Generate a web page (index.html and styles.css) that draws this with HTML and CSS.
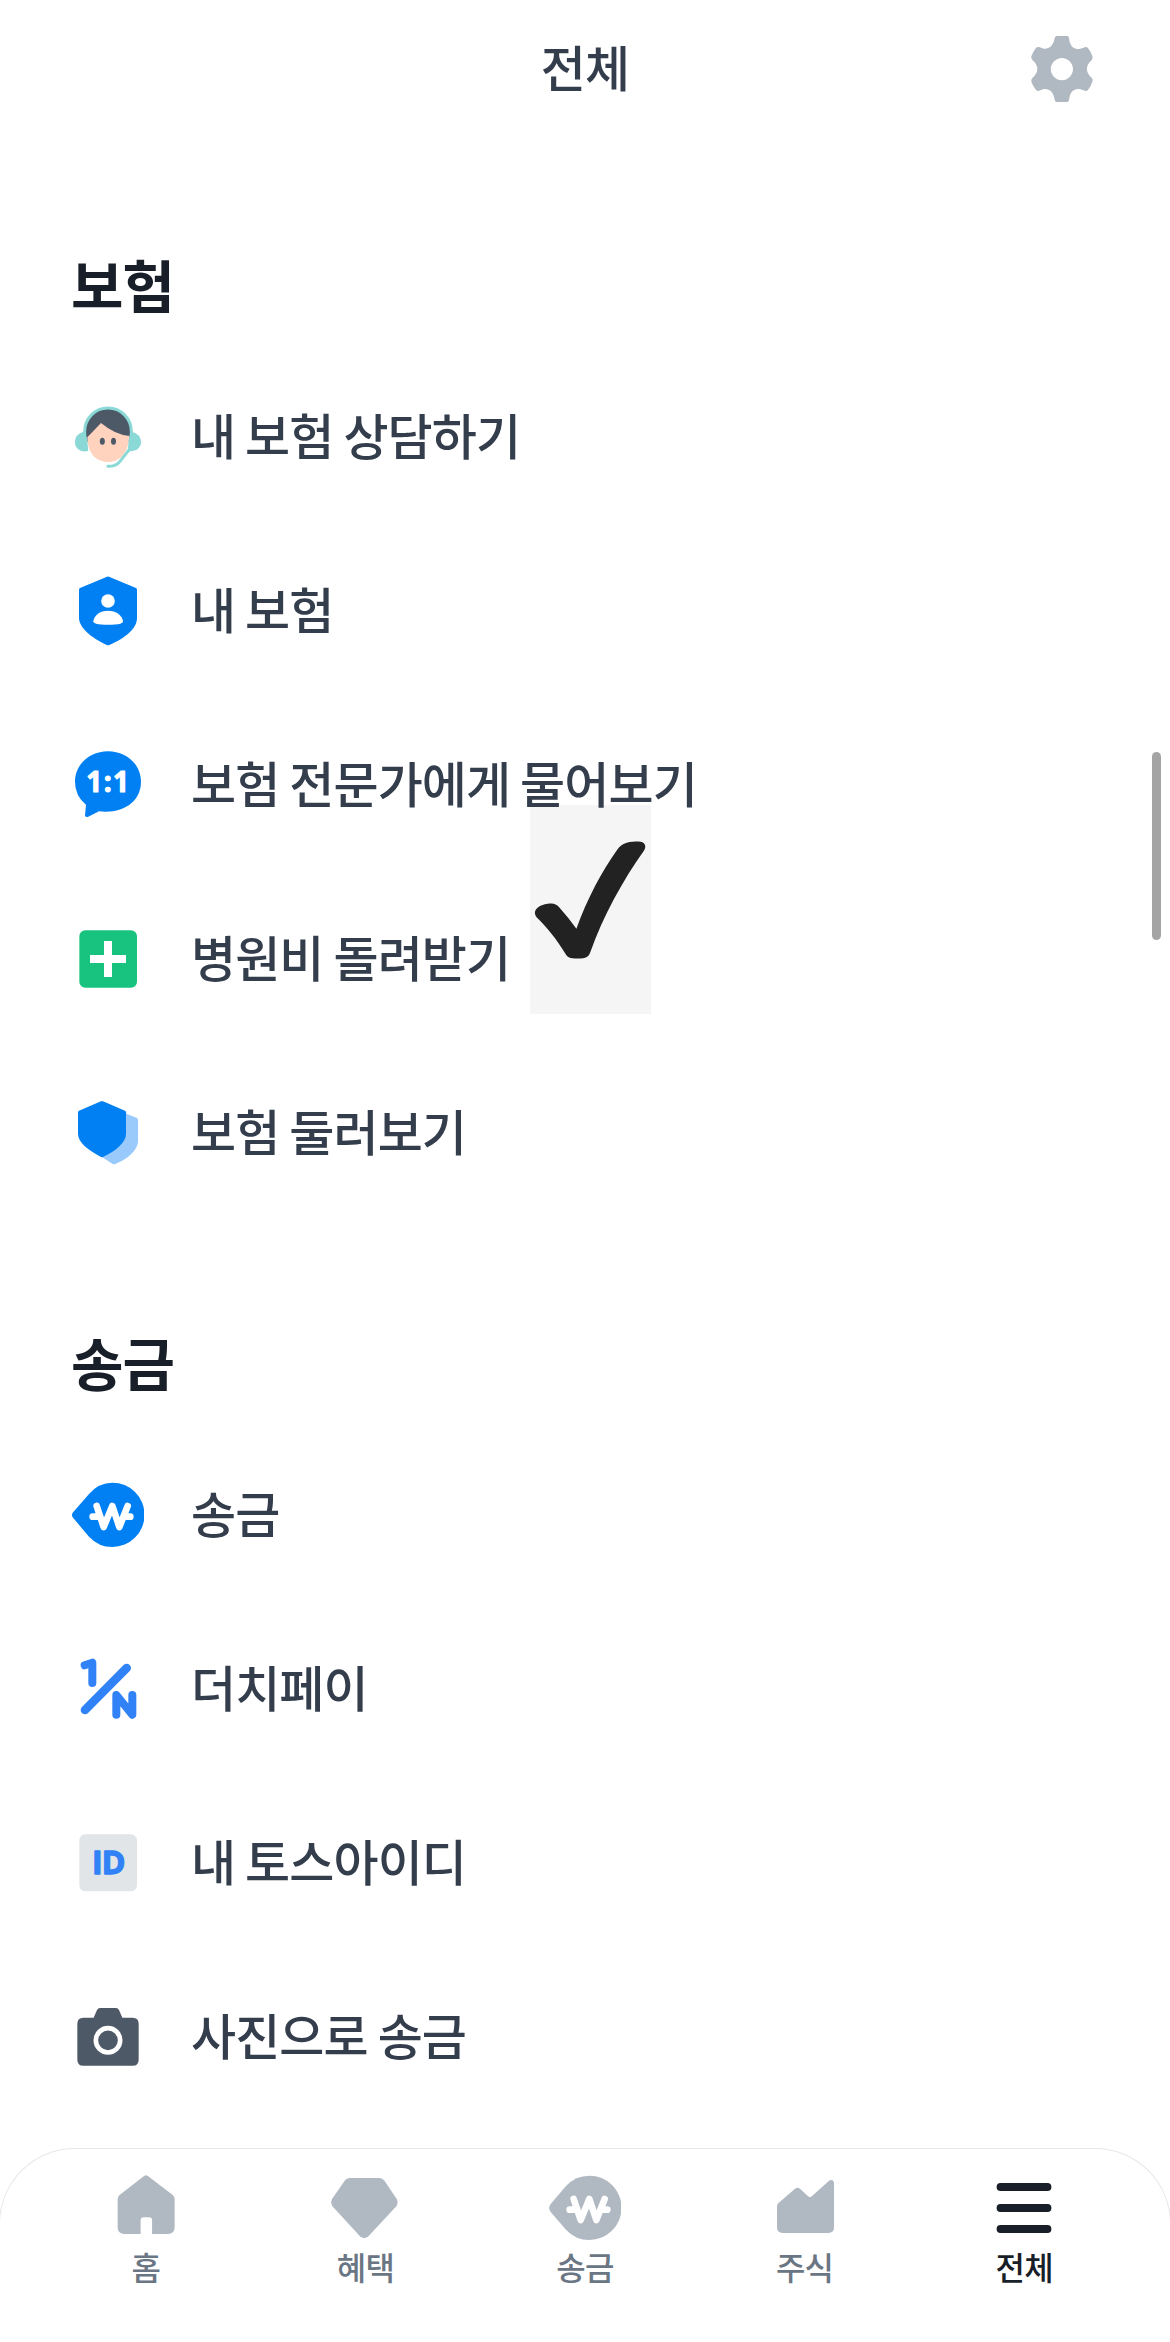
FILE: index.html
```
<!DOCTYPE html>
<html lang="ko">
<head>
<meta charset="utf-8">
<title>전체</title>
<link rel="stylesheet" href="styles.css">
</head>
<body>
<div class="app">
  <header class="header">
    <h1 class="title">전체</h1>
    <svg class="gear" viewBox="1231.5 99 168.5 216" preserveAspectRatio="none"><path fill="#b0b8c1" fill-rule="evenodd" d="M1303 108h25q3 0 4 5 1 15 5 23 7 13 19 11 5-1 10-4 6-4 10 0 7 11 11 26 2 7-2 12-11 12-11 26t11 26q4 5 2 12-4 15-11 26-4 4-10 0-5-3-10-4-12-1-19 11-4 8-5 23-1 5-4 5h-25q-3 0-4-5-2-15-6-23-7-12-19-11-4 1-9 4-6 4-10-1-7-11-11-25-1-7 3-12 11-12 11-26t-11-26q-5-5-3-12 4-14 11-26 4-4 9-1 4 3 9 4 12 1 19-10 5-9 7-23 1-5 4-5zM1315.500 174c-14 0-26 15-26 33s12 34 26 34 26-16 26-34-12-33-26-33z"/></svg>
  </header>
  <main class="content">
    <section class="section">
      <h2 class="heading">보험</h2>
      <ul class="list">
        <li class="row"><svg class="icon" viewBox="96 513 216 216"><circle cx="204" cy="604" r="69" fill="#4e5968"/><path fill="#ffd3bd" d="M142 622L183 579Q225 614 268 618C266 664 244 696 204 696S142 664 142 622z"/><path d="M134 615v-11a70 70 0 0 1 140 0v11" fill="none" stroke="#8ad9d6" stroke-width="9"/><path fill="#8ad9d6" d="M131 605Q105 612 105 637C105 656 121 668 145 663L141 624 136 605zM275 605Q303 612 303 637C303 655 286 667 263 663L267 624 271 605z"/><path d="M266 661L240 694Q227 710 204 709" fill="none" stroke="#8ad9d6" stroke-width="9" stroke-linecap="round"/><ellipse cx="187" cy="634" rx="7.500" ry="10.500" fill="#4e5968"/><ellipse cx="220.500" cy="634" rx="7.500" ry="10.500" fill="#4e5968"/></svg><span class="label">내 보험 상담하기</span></li>
        <li class="row"><svg class="icon" viewBox="96 75 216 216"><path fill="#0080f3" d="M201 80q3-1 6 0l81 34q3 2 3 5v85c0 32-36 61-83 81q-4 2-8 0c-47-22-83-53-83-81v-85q0-3 3-5z"/><circle cx="204" cy="153" r="20.500" fill="#fff"/><path fill="#fff" d="M160 214c2-18 20-32 44-32s43 14 45 32q0 5-8 7c-16 4-57 4-73 0q-8-2-8-7z"/></svg><span class="label">내 보험</span></li>
        <li class="row"><svg class="icon" viewBox="96 597 216 216"><path fill="#0080f3" d="M204 604c56 0 99 40 99 91 0 57-50 97-126 89l-32 16q-10 3-10-4l3-32q-33-27-33-69c0-51 43-91 99-91z"/><text x="203" y="727" class="ratio" textLength="128">1:1</text></svg><span class="label">보험 전문가에게 물어보기</span></li>
        <li class="row"><svg class="icon" viewBox="96 69 216 216"><rect x="118" y="91" width="173" height="172" rx="18" fill="#18c37f"/><path d="M150 177h108M204 123v108" stroke="#fff" stroke-width="24"/></svg><span class="label">병원비 돌려받기</span></li>
        <li class="row"><svg class="icon" viewBox="96 591 216 216"><path fill="#99cafb" d="M222 626l69 28q3 2 3 5v64c0 28-33 55-68 69q-4 2-8 0l-32-21z"/><path fill="#0080f3" d="M183 604q3-1 6 0l66 28q3 2 3 5v64c0 27-30 50-69 70q-3 1-6 0c-40-23-69-43-69-70v-64q0-3 3-5z"/></svg><span class="label">보험 둘러보기</span></li>
      </ul>
    </section>
    <section class="section">
      <h2 class="heading">송금</h2>
      <ul class="list">
        <li class="row"><svg class="icon" viewBox="96 507 216 216"><path fill="#0080f3" d="M98 608L147 552Q176 518 217 518a96.500 96.500 0 0 1 0 193Q176 711 147 680L98 622q-4-7 0-14z"/><path class="won" d="M170 588l21 63 26-63 21 63 25-63M158 620h23M254 620h17"/></svg><span class="label">송금</span></li>
        <li class="row"><svg class="icon" viewBox="96 69 216 216"><path d="M135 240L260 114" stroke="#3182f6" stroke-width="26" stroke-linecap="round"/><path class="split" d="M134 106L157 98v61"/><path class="split" d="M229 254v-59l48 59v-59"/></svg><span class="label">더치페이</span></li>
        <li class="row"><svg class="icon" viewBox="96 591 216 216"><rect x="118" y="613" width="173" height="171" rx="18" fill="#e1e5e8"/><text x="156" y="733" class="idmark" textLength="100">ID</text></svg><span class="label">내 토스아이디</span></li>
        <li class="row"><svg class="icon" viewBox="96 123 216 216"><path fill="#4e5968" d="M180 144h48q6 0 9 6l10 23h31q18 0 18 18v108q0 18-18 18H130q-18 0-18-18V191q0-18 18-18h31l10-23q3-6 9-6z"/><circle cx="204" cy="241" r="36.500" fill="none" stroke="#fff" stroke-width="14"/></svg><span class="label">사진으로 송금</span></li>
      </ul>
    </section>
  </main>
  <nav class="tabs">
    <a class="tab"><svg class="icon" viewBox="287 126 188.200 216" preserveAspectRatio="none"><path fill="#b0b8c1" d="M376 138q5-4 10 0l65 57q5 5 5 13v84q0 20-18 20h-41v-42q0-8-8-8h-14q-8 0-8 8v42h-42q-18 0-18-20v-84q0-8 5-13z"/></svg><span>홈</span></a>
    <a class="tab"><svg class="icon" viewBox="861 126 188.200 216" preserveAspectRatio="none"><path fill="#b0b8c1" d="M915 144h78q8 0 13 8l32 55q5 10-1 22l-73 90q-11 11-22 0l-72-90q-6-12-1-22l33-55q5-8 13-8z"/></svg><span>혜택</span></a>
    <a class="tab"><svg class="icon" viewBox="96 507 216 216"><path fill="#b0b8c1" d="M101 603L147 549Q176 518 217 518a96.500 96.500 0 0 1 0 193Q176 711 147 680L101 627q-9-12 0-24z"/><path class="won" d="M170 588l21 63 26-63 21 63 25-63M158 620h23M254 620h17"/></svg><span>송금</span></a>
    <a class="tab"><svg class="icon" viewBox="519 126 188.200 216" preserveAspectRatio="none"><path fill="#b0b8c1" d="M544 219l43-43q7-6 13 0l21 23q5 5 10 0l45-47q5-4 9-1 4 3 4 9v132q0 17-15 17H555q-15 0-15-17v-63q0-6 4-10z"/></svg><span>주식</span></a>
    <a class="tab tab-active"><svg class="icon" viewBox="0 0 72 72"><path d="M12.500 15h47M12.500 36h47M12.500 57h47" stroke="#191f28" stroke-width="7.800" stroke-linecap="round"/></svg><span>전체</span></a>
  </nav>
  <div class="stamp"><svg class="check" viewBox="88 194 363 630"><path fill="#222" d="M103 525C96 503 129 490 152 491Q165 491 175 502 203 533 227 567C261 473 303 396 350 329 365 306 391 304 414 304 434 304 440 318 430 333 367 421 307 531 270 635 265 651 257 657 231 657 205 657 201 654 193 641 168 598 137 562 107 532Q104 529 103 525z"/></svg></div>
  <div class="scrollbar"></div>
</div>
</body>
</html>
```
FILE: styles.css
```
* { box-sizing: border-box; }

body {
  margin: 0;
  background: #fff;
  font-family: "Noto Sans CJK KR", sans-serif;
  color: #333d4b;
}

.app {
  position: relative;
  display: flex;
  flex-direction: column;
  height: 2342px;
  overflow: hidden;
}

.header {
  display: grid;
  grid-template-columns: 72px 1fr 72px;
  align-items: center;
  height: 142px;
  padding: 0 72px 4px;
}

.title {
  grid-column: 2;
  margin: 0;
  padding-bottom: 7px;
  text-align: center;
  font-size: 49px;
  font-weight: 500;
  line-height: 65px;
  letter-spacing: -0.9px;
}

.gear { width: 72px; height: 72px; }

.content {
  position: relative;
  z-index: 1;
  flex: 1;
}

.heading {
  height: 208px;
  margin: 0;
  padding: 101px 72px 0 71px;
  font-size: 57px;
  font-weight: 700;
  line-height: 80px;
  letter-spacing: -1px;
  color: #191f28;
}

.list { margin: 0; padding: 0; list-style: none; }

.row {
  display: flex;
  align-items: center;
  gap: 47px;
  height: 174px;
  padding: 0 72px;
}

.label {
  padding-bottom: 6px;
  font-size: 49px;
  font-weight: 500;
  line-height: 66px;
  letter-spacing: -0.9px;
  word-spacing: -2.9px;
}

.icon { flex: none; width: 72px; height: 72px; }

.ratio {
  font: 700 84px "Open Sans", sans-serif;
  fill: #fff;
  stroke: #fff;
  stroke-width: 3;
  stroke-linejoin: round;
  text-anchor: middle;
}

.idmark {
  font: 700 96px "Open Sans", sans-serif;
  fill: #3182f6;
  stroke: #3182f6;
  stroke-width: 4;
  stroke-linejoin: round;
}

.won {
  fill: none;
  stroke: #fff;
  stroke-width: 20;
  stroke-linecap: round;
  stroke-linejoin: round;
}

.split {
  fill: none;
  stroke: #3182f6;
  stroke-width: 24;
  stroke-linecap: round;
  stroke-linejoin: round;
}

.tabs {
  position: relative;
  z-index: 2;
  display: grid;
  grid-template-columns: repeat(5, 1fr);
  height: 194px;
  margin: 0 -1px;
  padding: 23px 36px 0;
  background: #fff;
  border: 1px solid #e5e8eb;
  border-bottom: 0;
  border-radius: 76px 76px 0 0;
}

.tab {
  display: flex;
  flex-direction: column;
  align-items: center;
  font-size: 32px;
  font-weight: 500;
  line-height: 44px;
  letter-spacing: -0.8px;
  color: #6b7684;
}

.tab-active { color: #191f28; }

.stamp {
  position: absolute;
  left: 530px;
  top: 805px;
  width: 121px;
  height: 209px;
  background: #f5f5f5;
}

.check { display: block; width: 100%; height: 100%; }

.scrollbar {
  position: absolute;
  z-index: 3;
  left: 1152px;
  top: 752px;
  width: 9px;
  height: 188px;
  border-radius: 5px;
  background: #a4a4a4;
}
```
